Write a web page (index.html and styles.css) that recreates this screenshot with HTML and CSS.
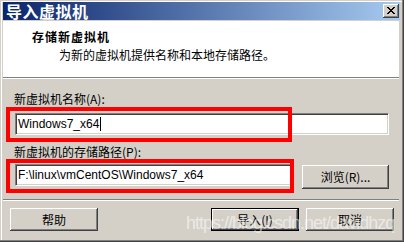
FILE: index.html
```html
<!DOCTYPE html>
<html>
<head>
<meta charset="utf-8">
<link rel="stylesheet" href="styles.css">
</head>
<body>
<div class="window">
  <div class="titlebar">
    <span class="title">导入虚拟机</span>
    <div class="close">
      <svg class="xicon" width="8" height="7" viewBox="0 0 8 7" shape-rendering="crispEdges">
        <rect x="0" y="0" width="2" height="1"/><rect x="6" y="0" width="2" height="1"/>
        <rect x="1" y="1" width="2" height="1"/><rect x="5" y="1" width="2" height="1"/>
        <rect x="2" y="2" width="4" height="1"/>
        <rect x="3" y="3" width="2" height="1"/>
        <rect x="2" y="4" width="4" height="1"/>
        <rect x="1" y="5" width="2" height="1"/><rect x="5" y="5" width="2" height="1"/>
        <rect x="0" y="6" width="2" height="1"/><rect x="6" y="6" width="2" height="1"/>
      </svg>
    </div>
  </div>
  <div class="client">
    <div class="header">
      <div class="heading">存储新虚拟机</div>
      <div class="subtitle">为新的虚拟机提供名称和本地存储路径。</div>
    </div>
    <div class="body">
      <div class="label">新虚拟机名称(A):</div>
      <div class="field wide">Windows7_x64<span class="caret"></span></div>
      <div class="label second">新虚拟机的存储路径(P):</div>
      <div class="row">
        <div class="field path">F:\linux\vmCentOS\Windows7_x64</div>
        <div class="btn browse">浏览(R)...</div>
      </div>
    </div>
    <div class="footer">
      <div class="btn">帮助</div>
      <div class="group">
        <div class="btn default">导入(I)</div>
        <div class="btn">取消</div>
      </div>
    </div>
  </div>
  <div class="mark mark-name"></div>
  <div class="mark mark-path"></div>
  <div class="watermark">https://blog.csdn.net/davidhzq</div>
</div>
</body>
</html>
```

FILE: styles.css
```css
html, body {
  margin: 0;
  padding: 0;
}
body {
  width: 404px;
  height: 242px;
  overflow: hidden;
  background: #d4d0c8;
  font-family: "Noto Sans CJK SC", "Liberation Sans", sans-serif;
  font-size: 12px;
  color: #000;
}
.window {
  position: relative;
  width: 404px;
  height: 242px;
  box-sizing: border-box;
  padding: 2px 4px 0 3px;
  box-shadow: inset -1px -1px 0 #404040, inset -2px -2px 0 #808080, inset 1px 1px 0 #d4d0c8, inset 2px 2px 0 #ffffff;
}
.titlebar {
  height: 18px;
  display: flex;
  align-items: center;
  background: linear-gradient(to right, #0a246a, #a6caf0);
  color: #fff;
}
.title {
  flex: 1;
  padding-left: 3px;
  font-size: 16px;
  font-weight: bold;
  line-height: 18px;
  letter-spacing: 0.5px;
  white-space: nowrap;
}
.close {
  width: 16px;
  height: 14px;
  margin-right: 1px;
  box-sizing: border-box;
  background: #d4d0c8;
  box-shadow: inset -1px -1px 0 #404040, inset 1px 1px 0 #ffffff, inset -2px -2px 0 #808080;
}
.xicon {
  display: block;
  margin: 3px 0 0 4px;
  fill: #000;
}
.client {
  margin-top: 1px;
  margin-right: 1px;
}
.header {
  height: 57px;
  box-sizing: border-box;
  background: #fff;
  border-bottom: 1px solid #808080;
  padding: 9px 0 0 29px;
}
.heading {
  font-weight: bold;
  line-height: 14px;
  letter-spacing: 1px;
}
.subtitle {
  margin-top: 4px;
  padding-left: 27px;
  line-height: 14px;
  white-space: nowrap;
}
.body {
  border-top: 1px solid #fff;
  border-bottom: 1px solid #808080;
  padding: 13px 10px 10px 12px;
}
.label {
  margin-left: -1px;
  line-height: 14px;
  white-space: nowrap;
}
.label.second {
  margin-top: 10px;
}
.field {
  box-sizing: border-box;
  height: 22px;
  margin-top: 7px;
  background: #fff;
  border: 1px solid;
  border-color: #808080 #ffffff #ffffff #808080;
  box-shadow: inset 1px 1px 0 #404040, inset -1px -1px 0 #d4d0c8;
  padding-left: 2px;
  font-family: "Liberation Sans", sans-serif;
  font-size: 12px;
  line-height: 20px;
  white-space: nowrap;
  overflow: hidden;
}
.caret {
  display: inline-block;
  width: 1px;
  height: 14px;
  background: #000;
  vertical-align: -3px;
  margin-left: 1px;
}
.field.wide {
  width: 374px;
}
.row {
  display: flex;
  align-items: flex-start;
  margin-top: 5px;
}
.row .field {
  margin-top: 0;
}
.field.path {
  width: 277px;
}
.btn {
  box-sizing: border-box;
  width: 88px;
  height: 23px;
  display: flex;
  align-items: center;
  justify-content: center;
  background: #d4d0c8;
  box-shadow: inset -1px -1px 0 #404040, inset 1px 1px 0 #ffffff, inset -2px -2px 0 #808080;
  line-height: 14px;
  white-space: nowrap;
}
.btn.browse {
  width: 87px;
  height: 24px;
  margin-left: 10px;
  margin-top: 1px;
}
.btn.default {
  border: 1px solid #000;
}
.footer {
  border-top: 1px solid #fff;
  display: flex;
  justify-content: space-between;
  padding: 7px 5px 0 7px;
}
.group {
  display: flex;
  gap: 7px;
}
.mark {
  position: absolute;
  box-sizing: border-box;
  border: 4px solid #ff0000;
}
.mark-name {
  left: 6px;
  top: 107px;
  width: 286px;
  height: 35px;
}
.mark-path {
  left: 6px;
  top: 159px;
  width: 288px;
  height: 34px;
}
.watermark {
  position: absolute;
  left: 186px;
  top: 214px;
  font-family: "Liberation Sans", sans-serif;
  font-size: 18px;
  line-height: 18px;
  letter-spacing: -1px;
  color: rgba(255, 255, 255, 0.55);
  white-space: nowrap;
}
```
